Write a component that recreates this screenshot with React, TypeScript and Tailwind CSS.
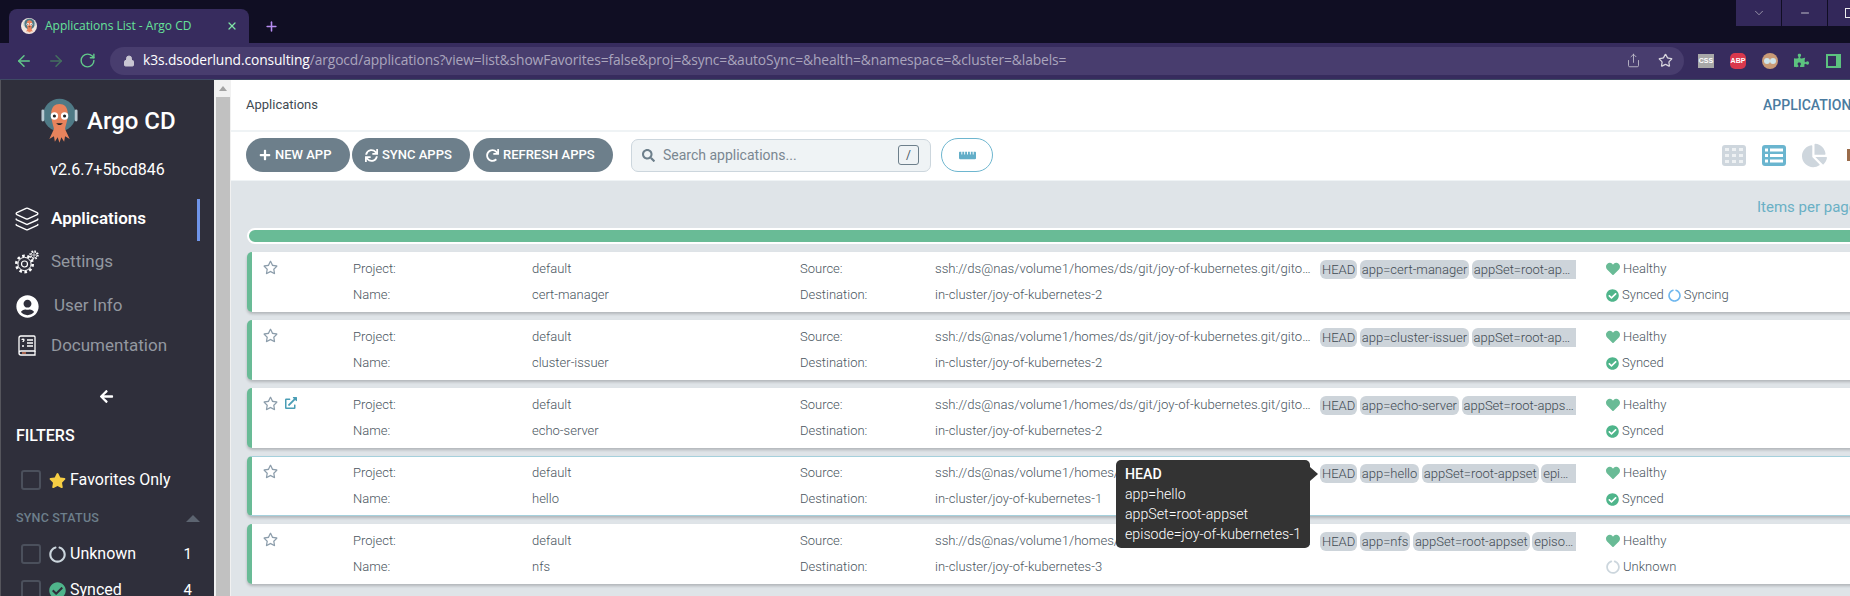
import React from 'react';
import {
  FaArrowLeft, FaChartPie, FaCheckCircle, FaCircleNotch, FaExternalLinkAlt, FaHeart, FaPlus, FaPuzzlePiece,
  FaRedo, FaRegStar, FaRulerHorizontal, FaSearch, FaStar, FaSync, FaUserCircle,
} from 'react-icons/fa';
import { Layers, Lock, Share, Star, X, ArrowLeft, ArrowRight, RotateCw, ChevronDown, Minus, Plus } from 'lucide-react';

const Squid: React.FC<{ className?: string }> = ({ className }) => (
  <svg viewBox="0 0 40 52" className={className}>
    <circle cx="20" cy="19" r="17.5" fill="#4f7a86" />
    <rect x="0.5" y="13" width="3" height="13" rx="1.5" fill="#b9c9d2" />
    <rect x="36.5" y="13" width="3" height="13" rx="1.5" fill="#b9c9d2" />
    <path d="M11 18c0-8 4-11 9-11s9 3 9 11c0 7-2 11-3 16l5 11-5-3-1 6-3-5-2 6-2-6-3 5-1-6-5 3 5-11c-1-5-3-9-3-16z" fill="#e8835c" />
    <circle cx="14.5" cy="20" r="4" fill="#fff" />
    <circle cx="25.5" cy="20" r="4" fill="#fff" />
    <circle cx="14.5" cy="20" r="1.7" fill="#222" />
    <circle cx="25.5" cy="20" r="1.7" fill="#222" />
    <path d="M16.5 28c1.5 2.5 5.5 2.5 7 0z" fill="#222" />
  </svg>
);

const BookIcon = () => (
  <svg viewBox="0 0 18 22" className="h-[22px] w-[18px]" fill="none" stroke="#fff" strokeWidth="1.3">
    <path d="M3 1h13a1 1 0 0 1 1 1v14H3a2 2 0 0 0-2 2V3a2 2 0 0 1 2-2z" />
    <path d="M1 18a2 2 0 0 0 2 2h14v-4" />
    <path d="M9 5h6M9 8h6M9 11h6M4 11h2M4 5c0-1 2-1 2 0s-1 1-1 2" />
    <path d="M4 18h4" stroke="#e8835c" />
  </svg>
);

// two gears, the teeth are a dashed stroke round each wheel
const GearsIcon = () => (
  <svg viewBox="0 0 24 24" className="h-[24px] w-[24px]" fill="none" stroke="#fff">
    <circle cx="9.5" cy="14" r="8.2" strokeWidth="2.6" strokeDasharray="2.6 2.55" />
    <circle cx="9.5" cy="14" r="6.6" strokeWidth="1" />
    <circle cx="9.5" cy="14" r="3" strokeWidth="1.2" />
    <circle cx="19" cy="5" r="3.9" strokeWidth="1.6" strokeDasharray="1.5 1.56" />
    <circle cx="19" cy="5" r="3" strokeWidth="0.8" />
    <circle cx="19" cy="5" r="1.2" strokeWidth="0.8" />
  </svg>
);

const GridViewIcon = () => (
  <svg viewBox="0 0 24 21" className="h-[21px] w-[24px]">
    <rect width="24" height="21" rx="3" fill="#ced6dd" />
    {[3, 9, 15].map(y =>
      [3, 10, 17].map(x => <rect key={`${x}-${y}`} x={x} y={y} width="4" height="3" fill="#eef1f3" />),
    )}
  </svg>
);

const ListViewIcon = () => (
  <svg viewBox="0 0 24 21" className="h-[21px] w-[24px]">
    <rect width="24" height="21" rx="3" fill="#6ab5cf" />
    {[3.5, 9, 14.5].map(y => (
      <React.Fragment key={y}>
        <rect x="3" y={y} width="3" height="3" fill="#fff" />
        <rect x="8" y={y} width="13" height="3" fill="#fff" />
      </React.Fragment>
    ))}
  </svg>
);

const Browser = () => (
  <>
    <div className="flex h-[43px] shrink-0 bg-[#100e23]">
      <div className="ml-[9px] mt-[9px] flex h-[34px] w-[240px] items-center rounded-t-[8px] bg-[#372c5e] pl-[12px] pr-[11px]">
        <span className="flex h-[16px] w-[16px] items-center justify-center overflow-hidden rounded-full bg-[#f2e6df]">
          <Squid className="h-[16px] w-[13px]" />
        </span>
        <span className="ml-[8px] flex-1 whitespace-nowrap text-[12px] text-[#66e39a] font-['Open_Sans',sans-serif]">Applications List - Argo CD</span>
        <X size={12} color="#7fe3a6" strokeWidth={2.5} />
      </div>
      <Plus size={15} color="#b78df2" strokeWidth={2.5} className="ml-[15px] mt-[19px]" />
      <div className="ml-auto flex h-[26px] gap-px">
        <div className="flex w-[45px] items-center justify-center bg-[#33285a]"><ChevronDown size={14} color="#ddd" strokeWidth={1} /></div>
        <div className="flex w-[45px] items-center justify-center bg-[#33285a]"><Minus size={12} color="#eee" strokeWidth={1.5} /></div>
        <div className="flex w-[22px] items-center bg-[#33285a] pl-[17px]"><span className="h-[10px] w-[10px] shrink-0 border border-[#eee]" /></div>
      </div>
    </div>
    <div className="flex h-[37px] shrink-0 items-center border-b border-[#3e4a64] bg-[#372c5e] pb-px">
      <ArrowLeft size={18} color="#62c98a" className="ml-[15px]" />
      <ArrowRight size={18} color="#44705f" className="ml-[14px]" />
      <RotateCw size={17} color="#62c98a" className="ml-[14px]" />
      <div className="ml-[14px] flex h-[28px] w-[1574px] items-center rounded-full bg-[#483d6e] pl-[13px]">
        <Lock size={12} color="#c9c6d2" fill="#c9c6d2" />
        <span className="ml-[8px] flex-1 whitespace-nowrap text-[13.8px] text-[#aaa5bd] font-['Open_Sans',sans-serif] tracking-[-0.1px]">
          <span className="text-white">k3s.dsoderlund.consulting</span>/argocd/applications?view=list&amp;showFavorites=false&amp;proj=&amp;sync=&amp;autoSync=&amp;health=&amp;namespace=&amp;cluster=&amp;labels=
        </span>
        <Share size={15} color="#c9c6d2" strokeWidth={1.3} />
        <Star size={15} color="#d8d6de" strokeWidth={2} className="ml-[17px] mr-[11px]" />
      </div>
      <div className="ml-[14px] flex h-[14px] w-[16px] items-center justify-center bg-[#a8a8a8] text-[7px] font-bold leading-none text-white font-['Liberation_Sans',sans-serif]">CSS</div>
      <div className="ml-[16px] flex h-[16px] w-[16px] items-center justify-center rounded-[5px] bg-[#d9384d] text-[7px] font-bold leading-none text-white font-['Liberation_Sans',sans-serif]">ABP</div>
      <span className="ml-[16px] flex h-[16px] w-[16px] items-center justify-center overflow-hidden rounded-full bg-[#c89a76]">
        <span className="h-[6px] w-[6px] rounded-full bg-[#cfe4ea]" />
        <span className="h-[6px] w-[6px] rounded-full bg-[#cfe4ea]" />
      </span>
      <FaPuzzlePiece size={15} color="#5cc27f" className="ml-[16px]" />
      <div className="ml-[17px] flex h-[14px] w-[15px] justify-end border-2 border-[#5cc27f]"><span className="h-full w-[3px] bg-[#5cc27f]" /></div>
    </div>
  </>
);

const NavItem: React.FC<{ icon: React.ReactNode; label: string; active?: boolean; className: string; textClass?: string }> = ({ icon, label, active, className, textClass }) => (
  <div className={`flex shrink-0 items-center ${className}`}>
    <span className="flex w-[50px] shrink-0 justify-center pl-[8px] pr-[6px]">{icon}</span>
    <span className={`text-[17px] ${active ? 'font-semibold text-white' : 'text-[#9398a0]'} ${textClass ?? ''}`}>{label}</span>
  </div>
);

const FilterRow: React.FC<{ icon: React.ReactNode; label: string; count?: string; className?: string }> = ({ icon, label, count, className }) => (
  <div className={`flex h-[20px] shrink-0 items-center pl-[20px] pr-[22px] ${className ?? ''}`}>
    <span className="h-[20px] w-[20px] shrink-0 rounded-[3px] border-2 border-[#4b505c]" />
    <span className="ml-[8px] w-[17px] shrink-0">{icon}</span>
    <span className="ml-[4px] flex-1 whitespace-nowrap text-[16px] text-white">{label}</span>
    {count && <span className="text-[15px] text-white">{count}</span>}
  </div>
);

const Sidebar = () => (
  <div className="flex h-full w-[214px] shrink-0 flex-col overflow-hidden border-l border-[#55555c] bg-[#2f2f3b]">
    <div className="mt-[17px] flex shrink-0 items-center pl-[40px]">
      <Squid className="h-[49px] w-[37px]" />
      <span className="ml-[9px] pb-[2px] text-[24px] font-medium text-white">Argo CD</span>
    </div>
    <div className="mt-[14px] shrink-0 text-center text-[16px] leading-[20px] text-white">v2.6.7+5bcd846</div>
    <div className="relative mt-[19px] shrink-0">
      <span className="absolute right-[14px] top-0 h-[42px] w-[3px] bg-[#6f94e8]" />
      <NavItem active label="Applications" className="h-[40px]" icon={<Layers size={26} color="#fff" strokeWidth={1.3} />} />
    </div>
    <NavItem label="Settings" className="mt-[3px] h-[40px]" icon={<GearsIcon />} />
    <NavItem label="User Info" className="mt-[4px] h-[40px]" textClass="ml-[3px]" icon={<FaUserCircle size={23} color="#fff" />} />
    <NavItem label="Documentation" className="h-[40px]" icon={<BookIcon />} />
    <div className="mt-[23px] flex shrink-0 justify-center pr-[2px]"><FaArrowLeft size={15} color="#fff" /></div>
    <div className="ml-[15px] mt-[22px] shrink-0 text-[16px] font-medium leading-[20px] text-white">FILTERS</div>
    <FilterRow className="mt-[24px]" label="Favorites Only" icon={<FaStar size={17} color="#f6ce44" />} />
    <div className="mt-[19px] flex h-[18px] shrink-0 items-center justify-between pl-[15px] pr-[14px]">
      <span className="text-[12.5px] font-medium tracking-[0.2px] text-[#6d7f8b]">SYNC STATUS</span>
      <span className="h-0 w-0 border-x-[7px] border-b-[7px] border-x-transparent border-b-[#5c6470]" />
    </div>
    <FilterRow className="mt-[17px]" label="Unknown" count="1" icon={<FaCircleNotch size={17} color="#ccd6dd" />} />
    <FilterRow className="mt-[16px]" label="Synced" count="4" icon={<FaCheckCircle size={17} color="#4fb58b" />} />
  </div>
);

const Scrollbar = () => (
  <div className="flex h-full w-[17px] shrink-0 flex-col items-center bg-[#f1f1f1] pl-px">
    <span className="mt-[6px] h-0 w-0 border-x-[4px] border-b-[5px] border-x-transparent border-b-[#a3a3a3]" />
    <span className="mt-[6px] w-[14px] flex-1 bg-[#c1c1c1]" />
  </div>
);

const ActionButton: React.FC<{ icon: React.ReactNode; label: string; className: string }> = ({ icon, label, className }) => (
  <button className={`flex h-[34px] items-center gap-[4px] rounded-full bg-[#6d7f8b] pl-[13px] text-[13px] font-medium text-white ${className}`}>
    {icon}
    {label}
  </button>
);

const Chip: React.FC<{ text: string; last?: boolean }> = ({ text, last }) => (
  <span className={`h-[19px] truncate bg-[#cdd4da] px-[2px] text-[13px] font-light leading-[19px] text-[#3f4a52] ${last ? 'min-w-0 flex-1 rounded-l-[6px]' : 'shrink-0 rounded-[6px]'}`}>{text}</span>
);

interface AppRow {
  name: string;
  cluster: string;
  chips: string[];
  sync: 'synced' | 'syncing' | 'unknown';
  link?: boolean;
  hovered?: boolean;
}

const apps: AppRow[] = [
  { name: 'cert-manager', cluster: 'in-cluster/joy-of-kubernetes-2', chips: ['HEAD', 'app=cert-manager', 'appSet=root-appset'], sync: 'syncing' },
  { name: 'cluster-issuer', cluster: 'in-cluster/joy-of-kubernetes-2', chips: ['HEAD', 'app=cluster-issuer', 'appSet=root-appset'], sync: 'synced' },
  { name: 'echo-server', cluster: 'in-cluster/joy-of-kubernetes-2', chips: ['HEAD', 'app=echo-server', 'appSet=root-appset'], sync: 'synced', link: true },
  { name: 'hello', cluster: 'in-cluster/joy-of-kubernetes-1', chips: ['HEAD', 'app=hello', 'appSet=root-appset', 'episode=joy-of-kubernetes-1'], sync: 'synced', hovered: true },
  { name: 'nfs', cluster: 'in-cluster/joy-of-kubernetes-3', chips: ['HEAD', 'app=nfs', 'appSet=root-appset', 'episode=joy-of-kubernetes-3'], sync: 'unknown' },
];

const Tooltip = () => (
  <div className="absolute right-full top-[-4px] z-10 mr-[10px] h-[88px] w-[194px] rounded-[5px] bg-[#333] py-[4px] pl-[9px] text-[14.2px] leading-[20px] text-white">
    <div className="font-medium">HEAD</div>
    <div>app=hello</div>
    <div>appSet=root-appset</div>
    <div className="whitespace-nowrap">episode=joy-of-kubernetes-1</div>
    <span className="absolute left-full top-[7px] h-0 w-0 border-y-[7px] border-l-[8px] border-y-transparent border-l-[#333]" />
  </div>
);

const AppCard: React.FC<{ app: AppRow }> = ({ app }) => (
  <div className={`grid h-[60px] w-[1700px] shrink-0 grid-cols-[101px_179px_268px_135px_671px_1fr] grid-rows-[26px_26px] content-center rounded-[5px] border-l-[5px] border-l-[#69bb96] bg-white text-[13px] font-light text-[#49555e] shadow-[0_2px_3px_rgba(0,0,0,0.2)] ${app.hovered ? 'border-y border-y-[#a5d0dc]' : ''}`}>
    <div className="row-span-2 flex items-start gap-[7px] pl-[11px] pt-[4px]">
      <FaRegStar size={15} color="#8c9dab" />
      {app.link && <FaExternalLinkAlt size={12} color="#4a9db5" className="mt-px" />}
    </div>
    <div className="flex items-center">Project:</div>
    <div className="flex items-center">default</div>
    <div className="flex items-center">Source:</div>
    <div className="flex items-center">
      <span className="w-[380px] truncate text-[13.15px]">ssh://ds@nas/volume1/homes/ds/git/joy-of-kubernetes.git/gitops/apps</span>
      <div className="relative ml-[5px] flex w-[256px] items-center gap-[2.5px]">
        {app.hovered && <Tooltip />}
        {app.chips.map((chip, i) => (
          <Chip key={chip} text={chip} last={i === app.chips.length - 1} />
        ))}
      </div>
    </div>
    <div className="flex items-center gap-[3px]">
      <FaHeart size={14} color="#69bb96" />
      Healthy
    </div>
    <div className="col-start-2 flex items-center">Name:</div>
    <div className="flex items-center">{app.name}</div>
    <div className="flex items-center">Destination:</div>
    <div className="flex items-center">{app.cluster}</div>
    <div className="flex items-center gap-[3px]">
      {app.sync === 'unknown' ? (
        <>
          <FaCircleNotch size={14} color="#ccd6dd" />
          Unknown
        </>
      ) : (
        <>
          <FaCheckCircle size={13} color="#4fb58b" />
          Synced
        </>
      )}
      {app.sync === 'syncing' && (
        <>
          <FaCircleNotch size={13} color="#6fb7ee" className="ml-px" />
          Syncing
        </>
      )}
    </div>
  </div>
);

const Main = () => (
  <div className="flex h-full min-w-0 flex-1 flex-col overflow-hidden bg-[#dfe4e8]">
    <div className="flex h-[52px] shrink-0 items-center border-b-2 border-[#eff3f5] bg-white pl-[15px]">
      <span className="flex-1 text-[13px] text-[#3f4a52]">Applications</span>
      <span className="w-[87px] overflow-hidden whitespace-nowrap text-[14px] font-medium text-[#4a7ba0]">APPLICATIONS 5</span>
    </div>
    <div className="flex h-[49px] shrink-0 items-center border-b border-[#eff3f5] bg-white pb-[2px] pl-[15px]">
      <ActionButton className="w-[104px]" label="NEW APP" icon={<FaPlus size={12} />} />
      <ActionButton className="ml-[2px] w-[118px]" label="SYNC APPS" icon={<FaSync size={13} />} />
      <ActionButton className="ml-[3px] w-[140px]" label="REFRESH APPS" icon={<FaRedo size={13} />} />
      <div className="ml-[18px] flex h-[33px] w-[300px] items-center rounded-[7px] border border-[#ccd6dd] bg-[#eff3f5] pl-[10px] pr-[11px]">
        <FaSearch size={13} color="#6d7f8b" />
        <span className="ml-[8px] flex-1 text-[14px] text-[#7a8791]">Search applications...</span>
        <span className="flex h-[20px] w-[21px] items-center justify-center rounded-[3px] border border-[#6d7f8b] text-[12px] text-[#495763]">/</span>
      </div>
      <button className="ml-[10px] flex h-[34px] w-[52px] items-center justify-center rounded-full border border-[#6eb6cf] bg-white">
        <FaRulerHorizontal size={17} color="#62aec8" />
      </button>
      <div className="ml-auto flex items-center">
        <GridViewIcon />
        <span className="ml-[16px]"><ListViewIcon /></span>
        <FaChartPie size={25} color="#ced6dd" className="ml-[16px]" />
        <span className="ml-[20px] h-[12px] w-[3px] bg-[#9a6b4a]" />
      </div>
    </div>
    <div className="min-h-0 flex-1 pl-[16px]">
      <div className="mt-[16px] flex h-[20px] items-center justify-end overflow-hidden">
        <span className="w-[93px] overflow-hidden whitespace-nowrap text-[15px] text-[#6ab0c5]">Items per page: 10</span>
      </div>
      <div className="mt-[11px] h-[16px] w-[1700px] rounded-l-full border-2 border-white bg-[#69bb96]" />
      <div className="mt-[8px] flex flex-col gap-[8px]">
        {apps.map(app => (
          <AppCard key={app.name} app={app} />
        ))}
      </div>
    </div>
  </div>
);

export default function App() {
  return (
    <div className="flex h-[596px] w-[1850px] flex-col overflow-hidden font-['Roboto',sans-serif]">
      <Browser />
      <div className="flex min-h-0 flex-1">
        <Sidebar />
        <Scrollbar />
        <Main />
      </div>
    </div>
  );
}
